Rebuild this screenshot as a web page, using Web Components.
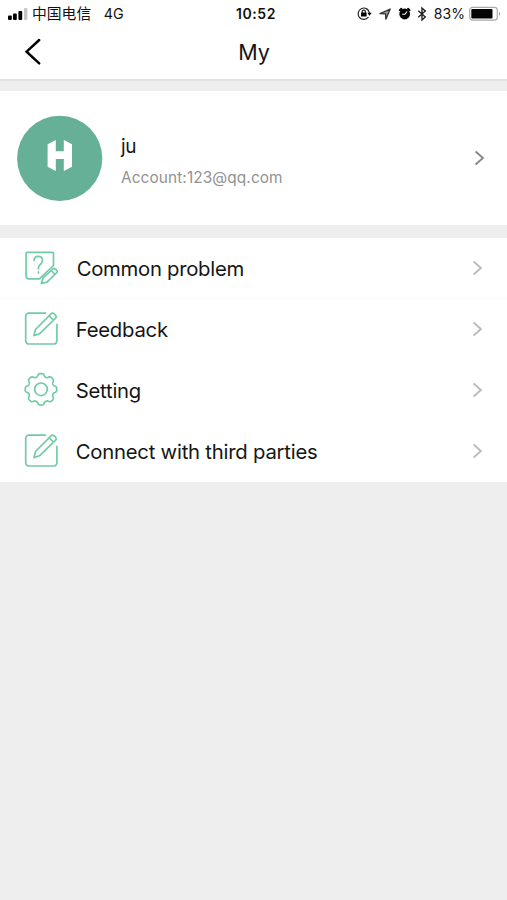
<!DOCTYPE html>
<html lang="en"><head><meta charset="utf-8"><title>My</title>
<style>
html,body{margin:0;height:100%;background:#eee}
body{font-family:Inter,"Noto Sans CJK SC",sans-serif;color:#151515}
</style></head><body>
<my-page></my-page>
<script>
const define=(name,html,after)=>customElements.define(name,class extends HTMLElement{
  constructor(){super();this.attachShadow({mode:'open'}).innerHTML=html;}
  connectedCallback(){if(after)after(this,this.shadowRoot);}
});

define('status-bar',`<style>
:host{display:grid;grid-template-columns:1fr auto 1fr;height:28px;align-items:center;font-size:14px;line-height:28px;background:#fff;color:#111}
.l,.r{display:flex;align-items:center;height:28px}
.l{padding-left:8px}.r{justify-content:flex-end;padding-right:6px}
.c{margin-left:4px;font:14.8px/26px "Noto Sans CJK SC",sans-serif;height:28px}
.g{margin-left:12.5px;font-size:14.3px}
.t{font-weight:600;font-size:14px;letter-spacing:.6px;padding-left:5px}
.p{font-size:14px;letter-spacing:.1px;margin:0 4px 0 6px}
svg{display:block;flex:none}
</style>
<div class="l"><svg width="20" height="14" viewBox="0 0 20 14"><rect y="8.4" width="3.8" height="4.6" rx="1"/><rect x="5" y="6.4" width="3.8" height="6.6" rx="1"/><rect x="10.4" y="4" width="3.8" height="9" rx="1"/><rect x="16" y="1" width="3.4" height="12" rx="1" fill="#c6c6c6"/></svg><span class="c">中国电信</span><span class="g">4G</span></div>
<span class="t">10:52</span>
<div class="r">
<svg width="72" height="18" viewBox="356 5 72 18"><g fill="none" stroke="#222" stroke-width="1.2"><path d="M368.5 17a5.7 5.7 0 1 1 1-3.8"/><path d="M362.2 13v-1.3a1.6 1.6 0 0 1 3.2 0V13"/></g><rect x="361" y="12.4" width="5.6" height="4.2" rx=".6"/><path d="M367.3 12.7h4.4l-2.2 3z"/>
<path d="M380 13.7 390.2 9l-4.3 10.2-.4-5.3z" fill="#999" stroke="#333" stroke-width="1.3" stroke-linejoin="round"/>
<circle cx="404.7" cy="14" r="5.4"/><path d="M399.8 10.2 401.4 8.8M409.6 10.2 408 8.8" stroke="#000" stroke-width="2" stroke-linecap="round"/><path d="M402.2 14.3h2.7l2.2-2.8" fill="none" stroke="#fff" stroke-width="1.1"/>
<path d="m418.3 10.7 7 6.2-3.3 3V8l3.3 3-7 6.2" fill="none" stroke="#222" stroke-width="1.4"/></svg>
<span class="p">83%</span>
<svg width="32" height="16" viewBox="0 0 32 16"><rect x=".7" y="1.3" width="27.6" height="12.8" rx="2.8" fill="#fff" stroke="#aaa" stroke-width="1.2"/><rect x="2.3" y="3" width="21.2" height="9.4" rx="1" fill="#050505"/><path d="M30 5.4q2 2.3 0 4.6z" fill="#999"/></svg></div>`);

define('nav-bar',`<style>
:host{display:grid;grid-template-columns:60px 1fr 60px;height:51px;background:#fff;border-bottom:2px solid #e2e2e2;align-items:center}
.t{text-align:center;font-size:21.5px;line-height:48px;padding-left:1px;height:51px;letter-spacing:-.1px}
svg{display:block}
</style><svg width="60" height="51" viewBox="0 28 60 51"><path d="M39.2 40 26.6 51.7 39.2 63.3" fill="none" stroke="#000" stroke-width="2.5" stroke-linecap="round"/></svg><span class="t"><slot></slot></span>`);

define('chevron-right',`<style>:host{display:block;flex:none;width:10px;height:16px;color:#bbb}svg{display:block}</style>
<svg width="10" height="16" viewBox="0 0 10 16"><path d="m.6 1.4 7.3 6.6L.6 14.6" fill="none" stroke="currentColor" stroke-width="1.9"/></svg>`);

define('profile-card',`<style>
:host{display:flex;align-items:center;height:134px;background:#fff;margin:10px 0 13px;padding:0 22px 0 17px}
.a{display:block;flex:none}.i{flex:1;margin-left:18px}
.n{font-size:19px;line-height:26px;margin-top:6px;letter-spacing:-.3px}
.m{font-size:15.4px;line-height:22px;margin-top:7px;color:#929292;letter-spacing:.1px}
chevron-right{color:#888}
</style><svg class="a" width="86" height="86" viewBox="0 0 86 86"><circle cx="42.7" cy="43.4" r="42.6" fill="#65b097"/><path d="M30.6 29.2l8.2-4.2v11.2h8V25l8.2 4.2v22.6l-8.2 4.2V44h-8v12l-8.2-4.2z" fill="#fff"/></svg>
<div class="i"><div class="n"><slot name="name"></slot></div><div class="m"><slot name="account"></slot></div></div><chevron-right></chevron-right>`);

const edit='<path d="M21.5 1.8H5a3.3 3.3 0 0 0-3.3 3.3v24.3a3.3 3.3 0 0 0 3.3 3.3h24.6a3.3 3.3 0 0 0 3.3-3.3V13"/><path d="M11.5 18.2 27.2 2.4q1.5-1.2 3.2.3l1.2 1.2q1.2 1.5 0 3L15.5 22.5l-5.6 1.8zM25.2 4.5l4.2 4.2"/>';
const doc='<path d="M29.5 15.2V3.1q0-1-1-1H3.1q-1 0-1 1v22.7q0 2.8 2.8 2.8H15.4L29.5 15.2"/><path d="M10 10.2q.2-4.2 4.3-4.2 4.2 0 4.2 4.2 0 2-2.1 3.8-2 1.6-2 3.7v.8M14.4 21.6v1"/><path d="m19 27.6 10-9.1q1.2-.8 2.4.3l1.5 1.5q.8 1-.1 2.1L23 31.8l-5.7 1.4zM27.2 20.2l3.8 4"/>';
// Eight rounded teeth: the radius follows a flattened cosine.
const gear=()=>{let d='';for(let i=0;i<240;i++){const a=i*Math.PI/120,r=14.3+1.5*Math.tanh(1.8*(Math.cos(8*a)+.2));d+=(i?'L':'M')+(17+r*Math.sin(a)).toFixed(2)+' '+(17-r*Math.cos(a)).toFixed(2);}return `<path d="${d}Z"/><circle cx="17" cy="17" r="6.3"/>`;};
define('line-icon',`<style>:host{display:block;flex:none;width:35px;height:35px}svg{display:block}</style><svg width="35" height="35" viewBox="0 -.3 35 35" fill="none" stroke="#72cba7" stroke-width="1.7" stroke-linejoin="round" stroke-linecap="round"></svg>`,(el,root)=>{root.querySelector('svg').innerHTML={edit,doc,gear:gear()}[el.getAttribute('name')];});

define('menu-row',`<style>
:host{display:flex;align-items:center;height:61px;box-sizing:border-box;padding:0 24px 0 24px;background:#fff}
.t{flex:1;margin-left:16.7px;font-size:20.3px;line-height:28px;white-space:nowrap;letter-spacing:-.22px}
:host([inset]) .t{margin-left:17.7px;letter-spacing:-.28px}
line-icon{margin-top:-2px}chevron-right{margin-top:-1px}
</style><line-icon></line-icon><span class="t"><slot></slot></span><chevron-right></chevron-right>`,(el,root)=>{
 const icon=document.createElement('line-icon');icon.setAttribute('name',el.getAttribute('icon'));root.querySelector('line-icon').replaceWith(icon);});

define('my-page',`<style>:host{display:block;min-height:100vh;background:#eee}nav{display:block}menu-row:first-child{box-shadow:inset 0 -1px #fafafa}</style>
<status-bar></status-bar><nav-bar>My</nav-bar>
<profile-card><span slot="name">ju</span><span slot="account">Account:123@qq.com</span></profile-card>
<nav><menu-row icon="doc" inset>Common problem</menu-row><menu-row icon="edit">Feedback</menu-row><menu-row icon="gear">Setting</menu-row><menu-row icon="edit">Connect with third parties</menu-row></nav>`);
</script></body></html>
